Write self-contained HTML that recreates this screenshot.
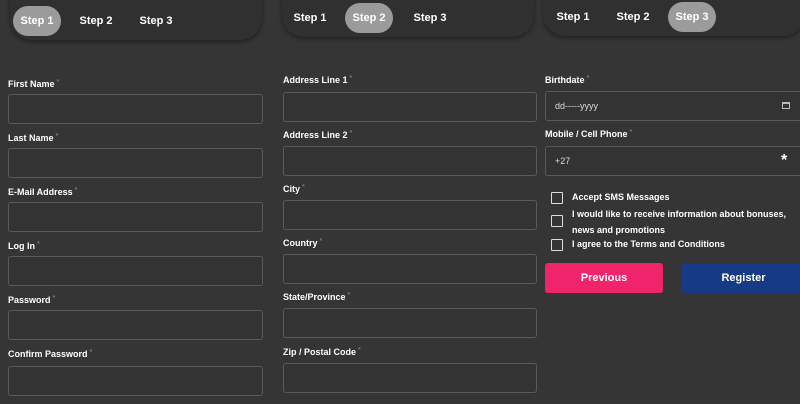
<!DOCTYPE html>
<html><head><style>
*{margin:0;padding:0;box-sizing:border-box}
body{width:800px;height:404px;background:#353535;overflow:hidden;position:relative;font-family:"Liberation Sans",sans-serif;font-weight:bold;color:#fff}
.a{position:absolute}
.bar{position:absolute;background:#303030;border-radius:0 0 22px 22px;box-shadow:0 2px 4px rgba(0,0,0,.4)}
.s{position:absolute;font-size:11px;line-height:30px;width:48px;text-align:center;height:30px;border-radius:15px}
.on{background:#9b9b9b}
.l{position:absolute;font-size:9px}
.l:after{content:" *";color:#777;font-size:7px;vertical-align:top}
.i{position:absolute;height:30px;border:1px solid #5a5a5a;border-radius:3px;background:#333}
.cb{position:absolute;left:551px;width:12px;height:12px;border:1.5px solid #ddd;border-radius:1px}
.ct{position:absolute;left:572px;font-size:9px;line-height:16px}
.btn{position:absolute;top:263px;height:30px;font-size:11px;line-height:30px;text-align:center;border-radius:3px}
</style></head><body>
<div class="bar" style="left:10px;top:-10px;width:252px;height:50px"></div>
<div class="s on" style="left:13px;top:6px">Step 1</div>
<div class="s" style="left:72px;top:6px">Step 2</div>
<div class="s" style="left:132px;top:6px">Step 3</div>
<div class="bar" style="left:282px;top:-10px;width:252px;height:47px"></div>
<div class="s" style="left:286px;top:3px">Step 1</div>
<div class="s on" style="left:345px;top:3px">Step 2</div>
<div class="s" style="left:406px;top:3px">Step 3</div>
<div class="bar" style="left:543px;top:-10px;width:262px;height:46px"></div>
<div class="s" style="left:549px;top:2px">Step 1</div>
<div class="s" style="left:609px;top:2px">Step 2</div>
<div class="s on" style="left:668px;top:2px">Step 3</div>

<div class="l" style="left:8px;top:79px">First Name</div><div class="i" style="left:8px;top:94px;width:255px"></div>
<div class="l" style="left:8px;top:133px">Last Name</div><div class="i" style="left:8px;top:148px;width:255px"></div>
<div class="l" style="left:8px;top:187px">E-Mail Address</div><div class="i" style="left:8px;top:202px;width:255px"></div>
<div class="l" style="left:8px;top:241px">Log In</div><div class="i" style="left:8px;top:256px;width:255px"></div>
<div class="l" style="left:8px;top:295px">Password</div><div class="i" style="left:8px;top:310px;width:255px"></div>
<div class="l" style="left:8px;top:349px">Confirm Password</div><div class="i" style="left:8px;top:366px;width:255px"></div>

<div class="l" style="left:283px;top:75px">Address Line 1</div><div class="i" style="left:283px;top:92px;width:254px"></div>
<div class="l" style="left:283px;top:130px">Address Line 2</div><div class="i" style="left:283px;top:146px;width:254px"></div>
<div class="l" style="left:283px;top:184px">City</div><div class="i" style="left:283px;top:200px;width:254px"></div>
<div class="l" style="left:283px;top:238px">Country</div><div class="i" style="left:283px;top:254px;width:254px"></div>
<div class="l" style="left:283px;top:292px">State/Province</div><div class="i" style="left:283px;top:308px;width:254px"></div>
<div class="l" style="left:283px;top:347px">Zip / Postal Code</div><div class="i" style="left:283px;top:363px;width:254px"></div>

<div class="l" style="left:545px;top:75px">Birthdate</div>
<div class="i" style="left:545px;top:91px;width:260px;font-size:9px;font-weight:normal;line-height:28px;padding-left:9px;color:#ddd">dd-----yyyy<span class="a" style="left:236px;top:10px;width:8px;height:7px;border:1px solid #bbb;border-top-width:2px"></span></div>
<div class="l" style="left:545px;top:129px">Mobile / Cell Phone</div>
<div class="i" style="left:545px;top:146px;width:260px;font-size:9px;font-weight:normal;line-height:28px;padding-left:9px;color:#ddd">+27<span class="a" style="left:235px;top:0;font-size:16px;font-weight:bold;color:#fff">*</span></div>

<div class="cb" style="top:192px"></div><div class="ct" style="top:189px">Accept SMS Messages</div>
<div class="cb" style="top:215px"></div><div class="ct" style="top:206px">I would like to receive information about bonuses,<br>news and promotions</div>
<div class="cb" style="top:239px"></div><div class="ct" style="top:236px">I agree to the Terms and Conditions</div>

<div class="btn" style="left:545px;width:118px;background:#f0246a">Previous</div>
<div class="btn" style="left:681px;width:125px;background:#173a86">Register</div>
</body></html>
